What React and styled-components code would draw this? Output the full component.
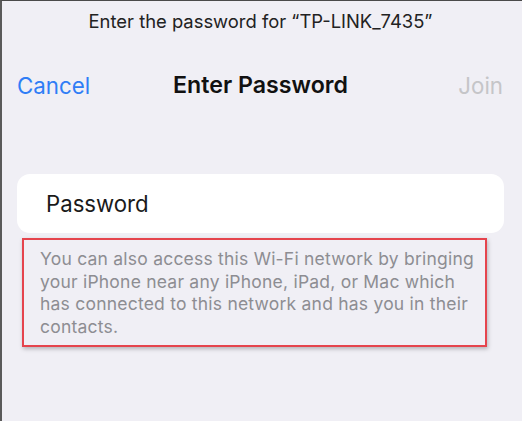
import React from 'react'
import styled, { createGlobalStyle } from 'styled-components'

const GlobalStyle = createGlobalStyle`
    html, body {
        margin: 0;
        padding: 0;
        background: #f0eff5;
    }
    body {
        font-family: Inter, "Liberation Sans", Arial, sans-serif;
        -webkit-font-smoothing: antialiased;
    }
`

const App = () => {
    return (
        <>
            <GlobalStyle />
            <Screen>
                <Prompt>Enter the password for “TP-LINK_7435”</Prompt>
                <NavBar>
                    <NavButton>Cancel</NavButton>
                    <NavTitle>Enter Password</NavTitle>
                    <NavButton $disabled>Join</NavButton>
                </NavBar>
                <Field>
                    <FieldLabel>Password</FieldLabel>
                </Field>
                <Note>
                    You can also access this Wi-Fi network by bringing your iPhone near any iPhone, iPad, or Mac which has connected to this network and has you in their contacts.
                </Note>
            </Screen>
        </>
    )
}

const Screen = styled.div`
    box-sizing: border-box;
    width: 522px;
    height: 421px;
    border-top: 1px solid #4a4a4a;
    border-left: 2px solid #5a5a5a;
    background: #f0eff5;
    display: flex;
    flex-direction: column;
    padding: 0 18px 0 15px;
`
const Prompt = styled.div`
    margin-top: 9px;
    text-align: center;
    font-size: 18.4px;
    line-height: 22px;
    color: #222;
`
const NavBar = styled.div`
    display: grid;
    grid-template-columns: 1fr auto 1fr;
    align-items: center;
    margin-top: 38px;
    height: 30px;
`
const NavButton = styled.div`
    font-size: 22.3px;
    color: ${p => p.$disabled ? '#c5c5c8' : '#2f7df6'};
    justify-self: ${p => p.$disabled ? 'end' : 'start'};
    margin-right: ${p => p.$disabled ? '1px' : '0'};
`
const NavTitle = styled.div`
    font-size: 23.2px;
    font-weight: 600;
    color: #111;
`
const Field = styled.div`
    margin-top: 74px;
    height: 59px;
    background: #fff;
    border-radius: 13px;
    display: flex;
    align-items: center;
    padding-left: 29px;
`
const FieldLabel = styled.div`
    font-size: 22.2px;
    color: #1a1a1a;
`
const Note = styled.div`
    width: 465px;
    box-sizing: border-box;
    margin: 5px 0 0 5px;
    border: 2px solid #e5444d;
    box-shadow: 1px 2px 4px rgba(0, 0, 0, 0.25);
    padding: 8px 6px 6px 16px;
    font-size: 17.5px;
    letter-spacing: 0.22px;
    line-height: 22.7px;
    color: #8d8d92;
`

export default App
